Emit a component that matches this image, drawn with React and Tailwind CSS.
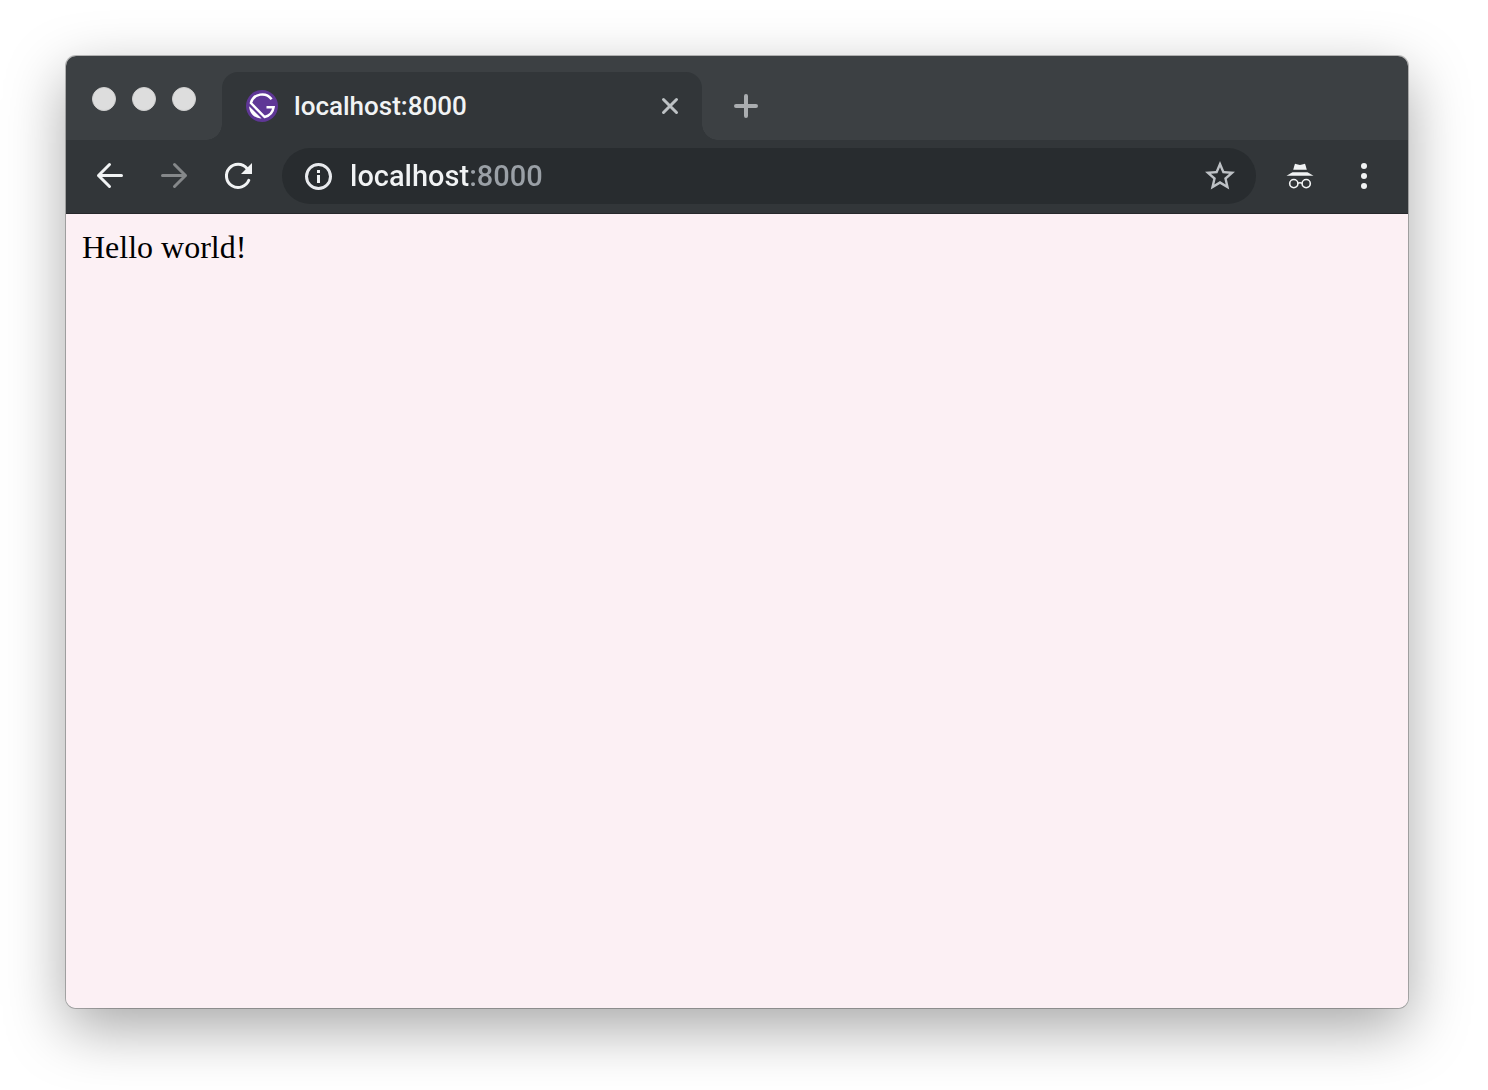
const iconButton = "flex size-8 shrink-0 items-center justify-center text-[#f1f3f4]";

function WindowControls() {
  return (
    <div className="flex gap-4">
      <button aria-label="Close window" className="size-6 rounded-full border border-[#d0d0d0] bg-[#dddddd]" />
      <button aria-label="Minimize window" className="size-6 rounded-full border border-[#d0d0d0] bg-[#dddddd]" />
      <button aria-label="Zoom window" className="size-6 rounded-full border border-[#d0d0d0] bg-[#dddddd]" />
    </div>
  );
}

function GatsbyLogo() {
  return (
    <svg viewBox="0 0 32 32" className="size-8 shrink-0" fill="none" aria-hidden="true">
      <circle cx="16" cy="16" r="16" fill="#5f3796" />
      <path d="M25.6 9.2A11.7 11.7 0 0 0 4.9 13L18.6 27A11.7 11.7 0 0 0 27.6 17.2H20.5" stroke="#fff" strokeWidth="2.5" />
      <path d="M3.2 16.2L15.6 28.6C8.6 28.6 3.2 23.2 3.2 16.2z" fill="#fff" />
    </svg>
  );
}

function TabStrip() {
  return (
    <div className="flex items-end bg-[#3c4043] pt-4 pl-[26px]">
      <div className="flex h-17 items-start pt-[15px]">
        <WindowControls />
      </div>
      <div className="ml-2.5 size-4 shrink-0 bg-[radial-gradient(circle_at_0_0,transparent_15.5px,#323639_16px)]" />
      <div className="flex h-17 w-120 min-w-0 items-center rounded-t-2xl bg-[#323639] pr-4 pl-6">
        <GatsbyLogo />
        <span className="ml-4 flex-1 truncate text-[26px] leading-8 font-medium text-[#f1f3f4]">localhost:8000</span>
        <button aria-label="Close tab" className="flex size-8 items-center justify-center">
          <svg viewBox="0 0 32 32" className="size-8" stroke="#bdc1c4" strokeWidth="3" strokeLinecap="round">
            <path d="M9.5 9.5l13 13M22.5 9.5l-13 13" />
          </svg>
        </button>
      </div>
      <div className="size-4 shrink-0 bg-[radial-gradient(circle_at_100%_0,transparent_15.5px,#323639_16px)]" />
      <div className="ml-3 flex h-17 items-center">
        <button aria-label="New tab" className="flex size-8 items-center justify-center">
          <svg viewBox="0 0 32 32" className="size-8" stroke="#aaadb0" strokeWidth="4" strokeLinecap="round">
            <path d="M16 6v20M6 16h20" />
          </svg>
        </button>
      </div>
    </div>
  );
}

function AddressBar() {
  return (
    <div className="flex h-14 min-w-0 flex-1 items-center rounded-full bg-[#282c2f] pr-[18px] pl-5">
      <button aria-label="View site information" className={iconButton}>
        <svg viewBox="0 0 32 32" className="size-8" fill="none">
          <circle cx="16.5" cy="16.5" r="12" stroke="#e8eaed" strokeWidth="3" />
          <path d="M15 10h3v3h-3zM15 15h3v8h-3z" fill="#f1f3f4" />
        </svg>
      </button>
      <input
        type="text"
        aria-label="Address"
        defaultValue="localhost:8000"
        spellCheck={false}
        className="ml-4 h-10 min-w-0 flex-1 bg-[linear-gradient(to_right,#f1f3f4_119px,#9aa0a6_119px)] bg-clip-text text-[29px] leading-10 font-medium text-transparent caret-white outline-none"
      />
      <button aria-label="Bookmark this page" className="flex size-9 shrink-0 items-center justify-center">
        <svg viewBox="0 0 24 24" className="size-9" fill="#bdc1c5">
          <path d="M22 9.24l-7.19-.62L12 2 9.19 8.63 2 9.24l5.46 4.73L5.82 21 12 17.27 18.18 21l-1.63-7.03L22 9.24zM12 15.4l-3.76 2.27 1-4.28-3.32-2.88 4.38-.38L12 6.1l1.71 4.04 4.38.38-3.32 2.88 1 4.28L12 15.4z" />
        </svg>
      </button>
    </div>
  );
}

function Toolbar() {
  return (
    <div className="flex items-center gap-8 border-b border-[#26282b] bg-[#323639] px-7 pt-2 pb-[9px]">
      <button aria-label="Back" className={iconButton}>
        <svg viewBox="0 0 32 32" className="size-8" fill="none" stroke="currentColor" strokeWidth="3" strokeLinecap="round" strokeLinejoin="round">
          <path d="M27.5 15.5H4.5M15.5 4.5l-11 11 11 11" />
        </svg>
      </button>
      <button aria-label="Forward" disabled className="flex size-8 shrink-0 items-center justify-center text-[#85888a]">
        <svg viewBox="0 0 32 32" className="size-8" fill="none" stroke="currentColor" strokeWidth="3" strokeLinecap="round" strokeLinejoin="round">
          <path d="M4.5 15.5h23M16.5 4.5l11 11-11 11" />
        </svg>
      </button>
      <button aria-label="Reload" className={iconButton}>
        <svg viewBox="0 0 32 32" className="size-8" fill="none">
          <path d="M25 8.5A11.6 11.6 0 1 0 26.8 20.3" stroke="currentColor" strokeWidth="3" strokeLinecap="round" />
          <path d="M30 3v11H19z" fill="currentColor" />
        </svg>
      </button>
      <div className="-mx-1 flex min-w-0 flex-1">
        <AddressBar />
      </div>
      <button aria-label="Incognito" className={iconButton}>
        <svg viewBox="0 0 32 32" className="size-8" fill="none">
          <path d="M10.7 4.5q.3-.9 1.2-.6l4.1 1.2 4.1-1.2q.9-.3 1.2.6L22.8 9.8H9.2z" fill="currentColor" />
          <path d="M8.5 12.2h15l6 3.6h-27z" fill="currentColor" />
          <circle cx="9.8" cy="23.6" r="4.1" stroke="currentColor" strokeWidth="1.6" />
          <circle cx="22.2" cy="23.6" r="4.1" stroke="currentColor" strokeWidth="1.6" />
          <path d="M13.5 23.3q2.5-1.2 5 0" stroke="currentColor" strokeWidth="1.6" />
        </svg>
      </button>
      <button aria-label="Menu" className={iconButton}>
        <svg viewBox="0 0 32 32" className="size-8" fill="currentColor">
          <circle cx="16" cy="6" r="3" />
          <circle cx="16" cy="16" r="3" />
          <circle cx="16" cy="26" r="3" />
        </svg>
      </button>
    </div>
  );
}

export default function App() {
  return (
    <div className="flex min-h-screen flex-col bg-white pt-14 pr-20 pb-[82px] pl-[66px] font-[Roboto,sans-serif]">
      <div className="flex flex-1 flex-col overflow-hidden rounded-[10px] shadow-[0_0_0_1px_rgba(0,0,0,0.25),0_20px_60px_rgba(0,0,0,0.35)]">
        <TabStrip />
        <Toolbar />
        <main className="flex-1 bg-[#fcf0f4] p-4 font-['Liberation_Serif',serif] text-[32px] leading-[34px] text-black">
          Hello world!
        </main>
      </div>
    </div>
  );
}
